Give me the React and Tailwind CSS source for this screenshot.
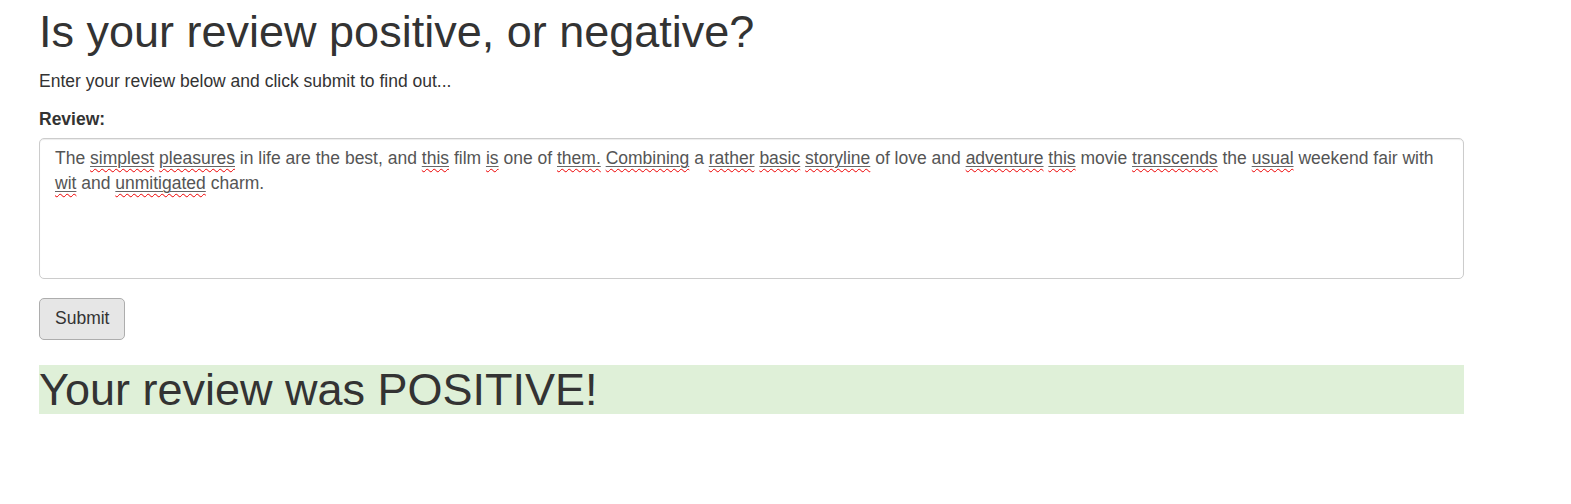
import React from 'react';

// misspelled word: red squiggle plus a thin grey underline, as the browser drew it
const Sp = ({ children }) => (
  <span className="underline decoration-wavy decoration-[#e00] decoration-1 underline-offset-[4px]">
    <span className="underline decoration-[#666] decoration-1 underline-offset-[2px]">{children}</span>
  </span>
);

export default function App() {
  return (
    <div className="min-h-[504px] bg-white font-['Liberation_Sans',Arial,sans-serif] text-[#333]">
      <div className="ml-[39px] w-[1425px] pt-[7px]">
        <h1 className="text-[45px] leading-[49.5px] font-normal mb-[12.5px]">
          Is your review positive, or negative?
        </h1>
        <p className="text-[17.5px] leading-[25px] mb-[12.5px]">
          Enter your review below and click submit to find out...
        </p>

        {/* Form */}
        <div className="mb-[18.75px]">
          <label className="block text-[17.5px] leading-[25px] font-bold mb-[6.25px]">Review:</label>
          <div className="h-[141px] border border-[#ccc] rounded-[5px] px-[15px] py-[7.5px] text-[17.5px] leading-[25px] text-[#555] shadow-[inset_0_1px_1px_rgba(0,0,0,0.075)]">
            The <Sp>simplest</Sp> <Sp>pleasures</Sp> in life are the best, and <Sp>this</Sp> film <Sp>is</Sp> one of <Sp>them.</Sp>{' '}
            <Sp>Combining</Sp> a <Sp>rather</Sp> <Sp>basic</Sp> <Sp>storyline</Sp> of love and <Sp>adventure</Sp> <Sp>this</Sp> movie{' '}
            <Sp>transcends</Sp> the <Sp>usual</Sp> weekend fair with <Sp>wit</Sp> and <Sp>unmitigated</Sp> charm.
          </div>
        </div>

        <button className="h-[42px] px-[15px] border border-[#adadad] rounded-[5px] bg-[#e6e6e6] text-[17.5px] leading-[25px] text-[#333]">
          Submit
        </button>

        <h1 className="mt-[25px] bg-[#dff0d8] text-[45px] leading-[49.5px] font-normal">
          Your review was POSITIVE!
        </h1>
      </div>
    </div>
  );
}
